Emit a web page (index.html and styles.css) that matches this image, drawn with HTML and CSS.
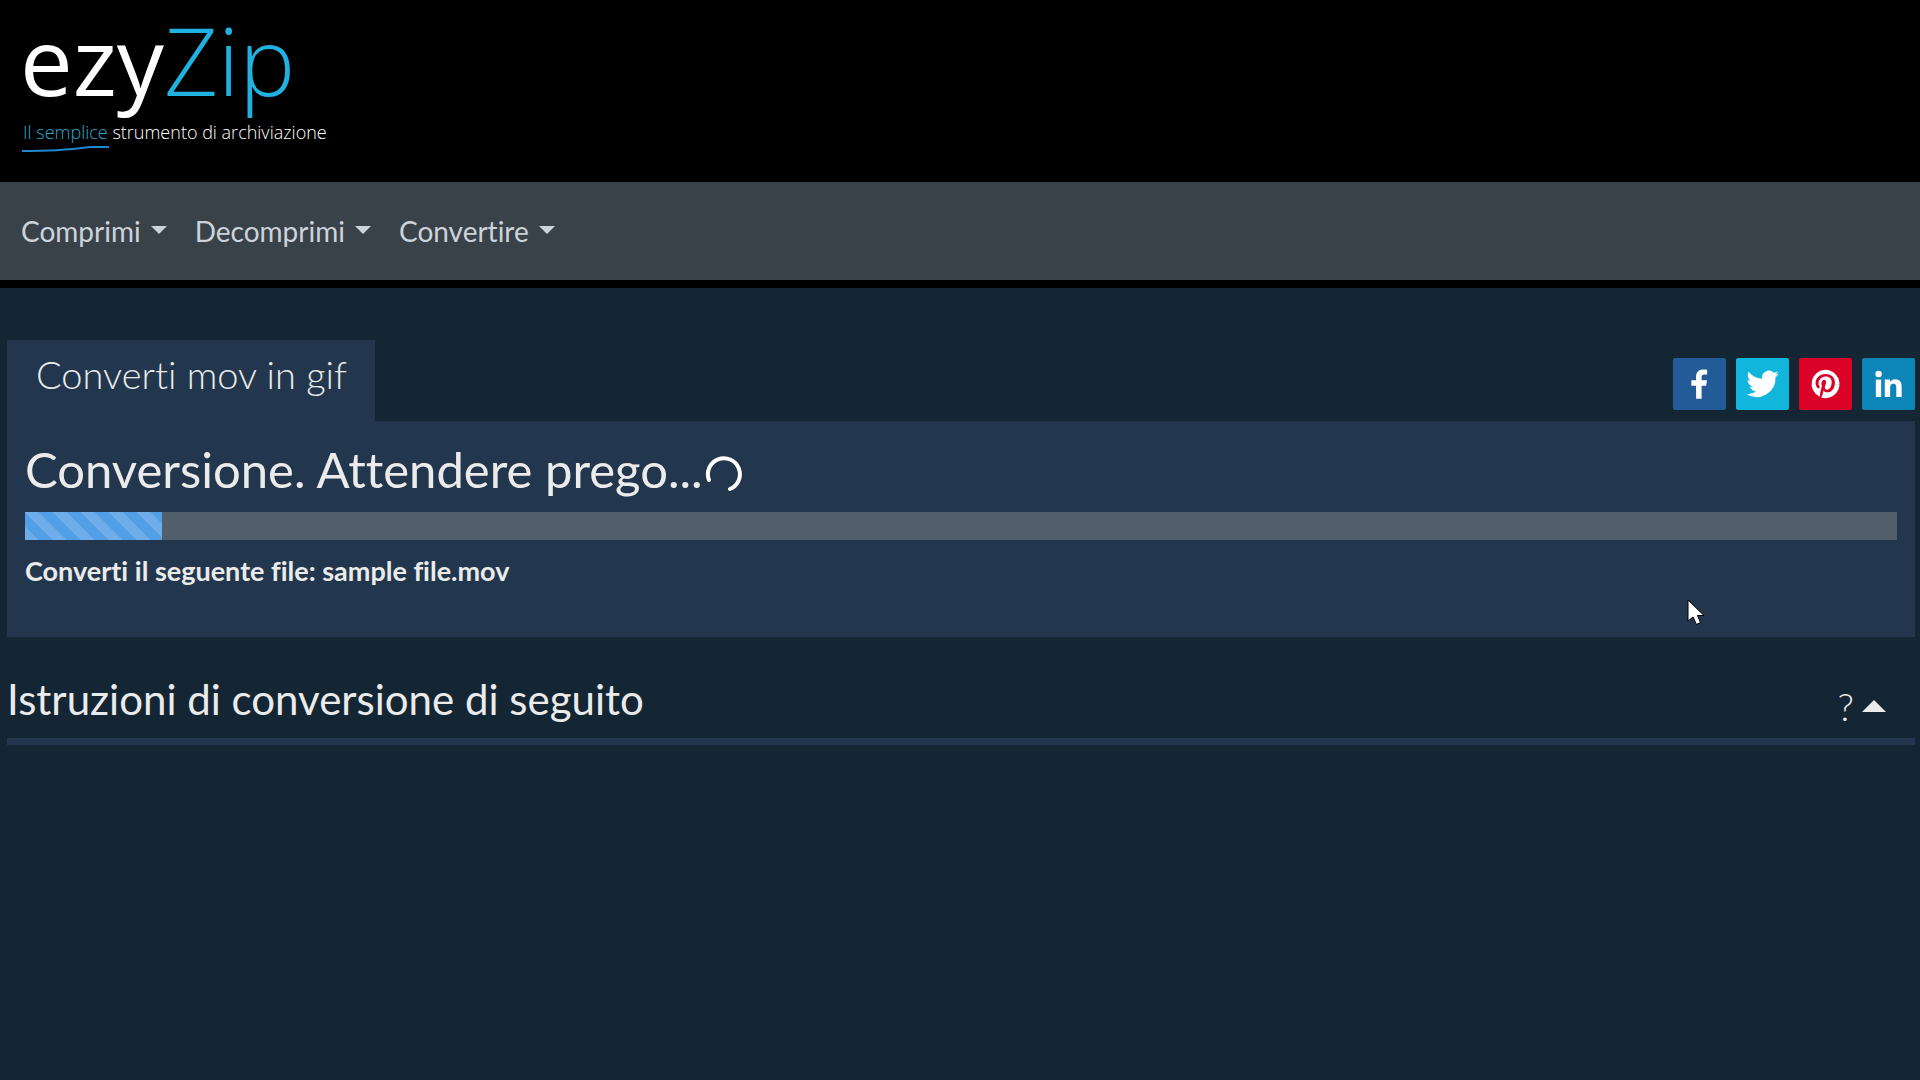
FILE: index.html
```
<!DOCTYPE html>
<html lang="it">
<head>
    <meta charset="UTF-8">
    <meta name="viewport" content="width=device-width, initial-scale=1.0">
    <title>ezyZip - Converti mov in gif</title>
    <link rel="stylesheet" href="styles.css">
</head>
<body>

    <header class="header">
        <a class="logo" href="#">
            <span class="logo-name">ezy<span class="logo-zip">Zip</span></span>
            <span class="logo-tagline"><span class="logo-accent">Il semplice</span> strumento di archiviazione</span>
            <svg class="logo-line" viewBox="0 0 88 8" aria-hidden="true">
                <path d="M0 5 C25 5 45 4 68 1 L87 1 L87 3 L68 3 C45 6 25 7 0 7z" fill="#1f86d0"/>
            </svg>
        </a>
    </header>

    <nav class="navbar">
        <button class="nav-item" type="button">Comprimi<span class="caret"></span></button>
        <button class="nav-item" type="button">Decomprimi<span class="caret"></span></button>
        <button class="nav-item" type="button">Convertire<span class="caret"></span></button>
    </nav>

    <main class="content">
        <div class="tab-row">
            <h1 class="tab">Converti mov in gif</h1>
            <div class="share">
                <a class="share-link facebook" href="#" aria-label="Facebook">
                    <svg viewBox="0 0 32 32"><path d="M17.300 25 V17 h2.800 l.5-3.300 h-3.300 v-1.900 c0-1 .4-1.600 1.700-1.600 h1.700 V7.200 C20.200 7.100 19.400 7 18.400 7 c-2.700 0-4.500 1.600-4.500 4.400 v2.300 h-2.900 V17 h2.900 v8z"/></svg>
                </a>
                <a class="share-link twitter" href="#" aria-label="Twitter">
                    <svg viewBox="0 0 32 32"><path d="M26 9.700c-.7.3-1.500.5-2.300.6.8-.5 1.500-1.300 1.800-2.200-.8.5-1.700.8-2.600 1a4.100 4.100 0 0 0-7 3.700c-3.400-.2-6.400-1.800-8.400-4.300a4.100 4.100 0 0 0 1.200 5.500c-.6 0-1.300-.2-1.800-.5v.1c0 2 1.400 3.600 3.300 4-.6.200-1.200.2-1.900.1a4.100 4.100 0 0 0 3.800 2.800A8.300 8.300 0 0 1 6 22.200 11.700 11.700 0 0 0 24 11.800c.8-.6 1.500-1.300 2-2.100z"/></svg>
                </a>
                <a class="share-link pinterest" href="#" aria-label="Pinterest">
                    <svg viewBox="0 0 32 32"><path d="M16 7.300a8.700 8.700 0 0 0-3.500 16.600c0-.6 0-1.400.2-2.100l1.100-4.700s-.3-.6-.3-1.400c0-1.300.8-2.300 1.700-2.300.8 0 1.200.6 1.200 1.300 0 .8-.5 2-.8 3.100-.2.9.5 1.700 1.400 1.700 1.700 0 2.800-2.200 2.800-4.700 0-2-1.300-3.400-3.700-3.400a4.200 4.200 0 0 0-4.400 4.200c0 .8.200 1.300.6 1.800.2.2.2.300.1.500l-.2.7c0 .2-.2.300-.4.200-1.300-.5-1.900-1.900-1.900-3.400 0-2.500 2.100-5.500 6.300-5.500 3.400 0 5.600 2.400 5.600 5.100 0 3.500-1.900 6.100-4.800 6.100-1 0-1.900-.5-2.200-1.100l-.6 2.400c-.2.700-.6 1.400-.9 1.900A8.700 8.700 0 1 0 16 7.300z"/></svg>
                </a>
                <a class="share-link linkedin" href="#" aria-label="LinkedIn">
                    <svg viewBox="0 0 32 32"><path d="M8.200 13.300h3.300V24H8.200z"/><circle cx="9.900" cy="9.900" r="2"/><path d="M13.700 13.300h3.200v1.500c.5-.9 1.600-1.800 3.200-1.800 3.300 0 4 2.200 4 5.100V24h-3.300v-5.200c0-1.300 0-2.900-1.800-2.900-1.700 0-2 1.400-2 2.800V24h-3.300z"/></svg>
                </a>
            </div>
        </div>

        <section class="panel">
            <h2 class="status">Conversione. Attendere prego...
                <svg class="spinner" viewBox="0 0 40 40" aria-hidden="true">
                    <path d="M6 26 A16 16 0 1 1 27 35" fill="none" stroke="#fff" stroke-width="4" stroke-linecap="round"/>
                </svg>
            </h2>
            <div class="progress" role="progressbar" aria-label="Conversione" aria-valuenow="7" aria-valuemin="0" aria-valuemax="100">
                <div class="progress-bar" style="width: 7.3%"></div>
            </div>
            <p class="file">Converti il seguente file: sample file.mov</p>
            <svg class="pointer" viewBox="0 0 18 27" aria-hidden="true">
                <path d="M1 1 V22 L6 18 L9.500 25.500 L13.500 23.500 L10.500 16.500 H17 Z" fill="#fff" stroke="#000" stroke-width="1"/>
            </svg>
        </section>

        <section class="guide">
            <h2 class="guide-title">Istruzioni di conversione di seguito</h2>
            <button class="guide-toggle" type="button">?<span class="caret-up"></span></button>
        </section>
    </main>

</body>
</html>
```

FILE: styles.css
```
body {
    font-family: Lato, sans-serif;
    font-size: 28px;
    font-variant-ligatures: none;
    margin: 0;
    color: #ebebeb;
    background-color: #142634;
}

h1, h2, p {
    margin: 0;
}

button {
    font: inherit;
    font-variant-ligatures: none;
    padding: 0;
    border: 0;
    background: none;
    cursor: pointer;
}

/* header */
.header {
    height: 182px;
    background-color: #000;
}

.logo {
    display: flex;
    flex-direction: column;
    padding: 10px 0 0 20px;
    font-family: "Open Sans", sans-serif;
    color: #fff;
    text-decoration: none;
}

.logo-name {
    font-size: 94px;
    line-height: 100px;
}

.logo-zip {
    font-weight: 300;
    color: #1fb1e0;
}

.logo-tagline {
    padding: 9px 3px 0;
    font-size: 18px;
    font-weight: 300;
    line-height: 26px;
}

.logo-accent {
    color: #2ba6cf;
}

.logo-line {
    width: 88px;
    height: 8px;
    padding-left: 2px;
}

/* navigation */
.navbar {
    display: flex;
    gap: 28px;
    height: 98px;
    padding: 0 21px;
    background-color: #394249;
    border-bottom: 8px solid #000;
}

.nav-item {
    color: #cdd3da;
}

.caret {
    display: inline-block;
    margin-left: 10px;
    vertical-align: 8px;
    border-top: 8px solid;
    border-right: 8px solid transparent;
    border-left: 8px solid transparent;
}

/* content */
.content {
    padding: 52px 5px 0 7px;
}

.tab-row {
    display: flex;
    justify-content: space-between;
}

.tab {
    padding: 10px 28px 23px 29px;
    font-size: 38px;
    font-weight: 300;
    line-height: 48px;
    background-color: #22374d;
}

.share {
    display: flex;
    gap: 10px;
    padding-top: 18px;
}

.share-link {
    width: 53px;
    height: 52px;
    border-radius: 2px;
}

.share-link svg {
    display: block;
    width: 100%;
    height: 100%;
    fill: #fff;
}

.facebook {
    background-color: #235a98;
}

.twitter {
    background-color: #12b6dc;
}

.pinterest {
    background-color: #db0227;
}

.linkedin {
    background-color: #0c86b6;
}

.panel {
    position: relative;
    padding: 18px 18px 47px;
    background-color: #22374d;
}

.status {
    display: flex;
    align-items: center;
    font-size: 49px;
    font-weight: 400;
    line-height: 60px;
}

.spinner {
    width: 40px;
    height: 40px;
    padding-top: 10px;
}

.progress {
    height: 28px;
    margin: 13px 0 11px;
    background-color: #525e6a;
}

.progress-bar {
    height: 100%;
    background-color: #539fe6;
    background-image: linear-gradient(45deg, rgba(255, 255, 255, .15) 25%, transparent 25%, transparent 50%, rgba(255, 255, 255, .15) 50%, rgba(255, 255, 255, .15) 75%, transparent 75%, transparent);
    background-size: 28px 28px;
}

.file {
    font-size: 27px;
    font-weight: 700;
    line-height: 39px;
}

.pointer {
    position: absolute;
    top: 178px;
    right: 210px;
    width: 18px;
    height: 27px;
}

.guide {
    display: flex;
    justify-content: space-between;
    align-items: center;
    margin-top: 28px;
    padding: 5px 29px 10px 0;
    border-bottom: 7px solid #22374d;
}

.guide-title {
    font-size: 42px;
    font-weight: 400;
    line-height: 56px;
}

.guide-toggle {
    display: flex;
    align-items: center;
    gap: 8px;
    padding-top: 14px;
    font-size: 38px;
    font-weight: 300;
    line-height: 44px;
    color: #ebebeb;
}

.caret-up {
    border-bottom: 12px solid;
    border-right: 12px solid transparent;
    border-left: 12px solid transparent;
}
```
